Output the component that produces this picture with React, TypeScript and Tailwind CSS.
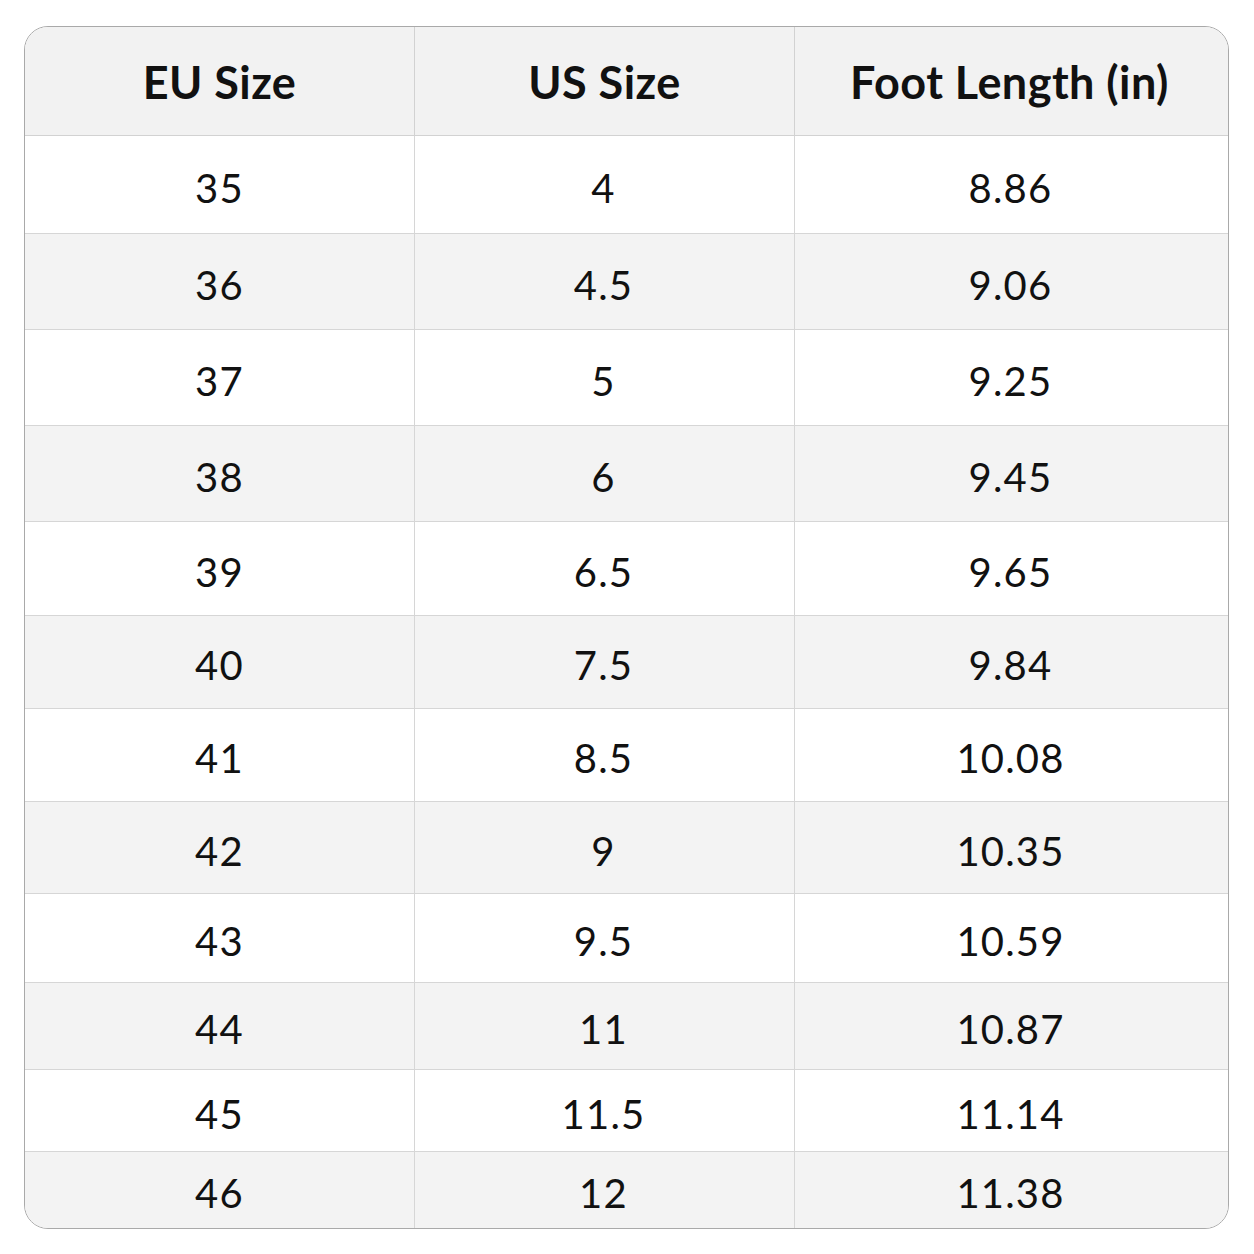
const rows = [
  { eu: '35', us: '4', len: '8.86', h: 'h-[98px]', bg: 'bg-white' },
  { eu: '36', us: '4.5', len: '9.06', h: 'h-[96px]', bg: 'bg-[#f3f3f3]' },
  { eu: '37', us: '5', len: '9.25', h: 'h-[96px]', bg: 'bg-white' },
  { eu: '38', us: '6', len: '9.45', h: 'h-[96px]', bg: 'bg-[#f3f3f3]' },
  { eu: '39', us: '6.5', len: '9.65', h: 'h-[94px]', bg: 'bg-white' },
  { eu: '40', us: '7.5', len: '9.84', h: 'h-[93px]', bg: 'bg-[#f3f3f3]' },
  { eu: '41', us: '8.5', len: '10.08', h: 'h-[93px]', bg: 'bg-white' },
  { eu: '42', us: '9', len: '10.35', h: 'h-[92px]', bg: 'bg-[#f3f3f3]' },
  { eu: '43', us: '9.5', len: '10.59', h: 'h-[89px]', bg: 'bg-white' },
  { eu: '44', us: '11', len: '10.87', h: 'h-[87px]', bg: 'bg-[#f3f3f3]' },
  { eu: '45', us: '11.5', len: '11.14', h: 'h-[82px]', bg: 'bg-white' },
  { eu: '46', us: '12', len: '11.38', h: 'h-[76px]', bg: 'bg-[#f3f3f3]' },
];

const cols = 'grid grid-cols-[390px_380px_1fr]';
const cell = 'flex items-center justify-center';

export default function App() {
  return (
    <div className="min-h-screen bg-white pt-[26px] pl-[24px] font-['Lato',sans-serif] text-[#111]">
      <div className="w-[1205px] overflow-hidden rounded-[24px] border border-[#a9a9a9]">
        {/* header */}
        <div className={`${cols} h-[109px] border-b border-[#d2d2d2] bg-[#f2f2f2] text-[45px] font-bold tracking-[0.01em]`}>
          <div className={`${cell} border-r border-[#d2d2d2] pt-[4px]`}>EU Size</div>
          <div className={`${cell} border-r border-[#d2d2d2] pt-[4px]`}>US Size</div>
          <div className={`${cell} pt-[4px] pr-[4px]`}>Foot Length (in)</div>
        </div>

        {rows.map((r, i) => (
          <div
            key={r.eu}
            className={`${cols} ${r.h} ${r.bg} text-[40px] tracking-[0.03em] ${i < rows.length - 1 ? 'border-b border-[#d6d6d6]' : ''}`}
          >
            <div className={`${cell} border-r border-[#d6d6d6] pt-[6px]`}>{r.eu}</div>
            <div className={`${cell} border-r border-[#d6d6d6] pt-[6px] pr-[2px]`}>{r.us}</div>
            <div className={`${cell} pt-[6px] pr-[2px]`}>{r.len}</div>
          </div>
        ))}
      </div>
    </div>
  );
}
